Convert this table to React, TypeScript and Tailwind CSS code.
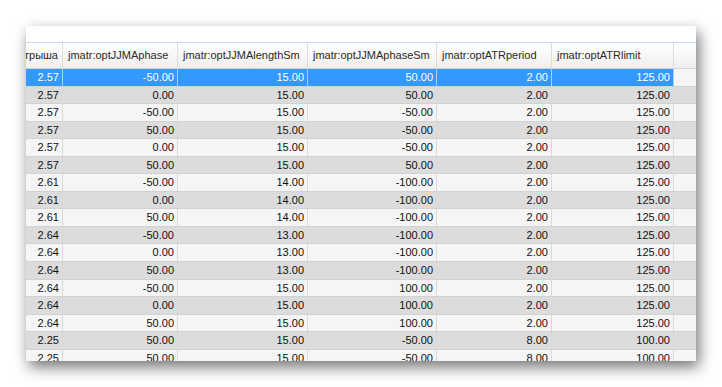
import React from 'react'

const cols = [
  { title: 'трыша', w: 37 },
  { title: 'jmatr:optJJMAphase', w: 115 },
  { title: 'jmatr:optJJMAlengthSm', w: 130 },
  { title: 'jmatr:optJJMAphaseSm', w: 129 },
  { title: 'jmatr:optATRperiod', w: 115 },
  { title: 'jmatr:optATRlimit', w: 122 },
]

const rows: string[][] = [
  ['2.57', '-50.00', '15.00', '50.00', '2.00', '125.00'],
  ['2.57', '0.00', '15.00', '50.00', '2.00', '125.00'],
  ['2.57', '-50.00', '15.00', '-50.00', '2.00', '125.00'],
  ['2.57', '50.00', '15.00', '-50.00', '2.00', '125.00'],
  ['2.57', '0.00', '15.00', '-50.00', '2.00', '125.00'],
  ['2.57', '50.00', '15.00', '50.00', '2.00', '125.00'],
  ['2.61', '-50.00', '14.00', '-100.00', '2.00', '125.00'],
  ['2.61', '0.00', '14.00', '-100.00', '2.00', '125.00'],
  ['2.61', '50.00', '14.00', '-100.00', '2.00', '125.00'],
  ['2.64', '-50.00', '13.00', '-100.00', '2.00', '125.00'],
  ['2.64', '0.00', '13.00', '-100.00', '2.00', '125.00'],
  ['2.64', '50.00', '13.00', '-100.00', '2.00', '125.00'],
  ['2.64', '-50.00', '15.00', '100.00', '2.00', '125.00'],
  ['2.64', '0.00', '15.00', '100.00', '2.00', '125.00'],
  ['2.64', '50.00', '15.00', '100.00', '2.00', '125.00'],
  ['2.25', '50.00', '15.00', '-50.00', '8.00', '100.00'],
  ['2.25', '50.00', '15.00', '-50.00', '8.00', '100.00'],
]

export default function App() {
  return (
    <div className="w-[722px] h-[387px] bg-white pl-[26px] pt-[26px] overflow-hidden" style={{ fontFamily: '"Liberation Sans", Arial, sans-serif' }}>
      <div className="w-[670px] h-[335px] bg-white flex flex-col overflow-hidden shadow-[3px_6px_14px_rgba(0,0,0,0.55)]">
        <div className="h-[17px] shrink-0 bg-white border-b border-[#c9dcf2]" />
        <div className="h-[26px] shrink-0 flex bg-gradient-to-b from-white to-[#efefef] border-b border-[#d5d5d5] text-[11px] text-[#2a2a2a]">
          {cols.map((c, i) => (
            <div
              key={i}
              className={`shrink-0 border-r border-[#dcdcdc] flex items-center overflow-hidden whitespace-nowrap ${i === 0 ? 'justify-end pr-[4px]' : 'pl-[5px]'}`}
              style={{ width: c.w }}
            >
              {c.title}
            </div>
          ))}
          <div className="flex-1" />
        </div>
        <div className="flex-1 overflow-hidden">
          {rows.map((r, ri) => {
            const sel = ri === 0
            const bg = sel ? 'bg-[#3399ff] text-white' : ri % 2 === 1 ? 'bg-[#dcdcdc] text-[#111]' : 'bg-[#f5f5f5] text-[#111]'
            return (
              <div key={ri} className={`h-[17.56px] flex border-b border-[#d2d2d2] text-[11px] ${bg}`}>
                {r.map((v, ci) => (
                  <div
                    key={ci}
                    className={`shrink-0 flex items-center justify-end pr-[3px] border-r ${sel ? 'border-[#a9d0f8]' : 'border-[#d9d9d9]'}`}
                    style={{ width: cols[ci].w }}
                  >
                    {v}
                  </div>
                ))}
                <div className={`flex-1 ${ri % 2 === 1 ? 'bg-[#dcdcdc]' : 'bg-[#f5f5f5]'}`} />
              </div>
            )
          })}
        </div>
      </div>
    </div>
  )
}
